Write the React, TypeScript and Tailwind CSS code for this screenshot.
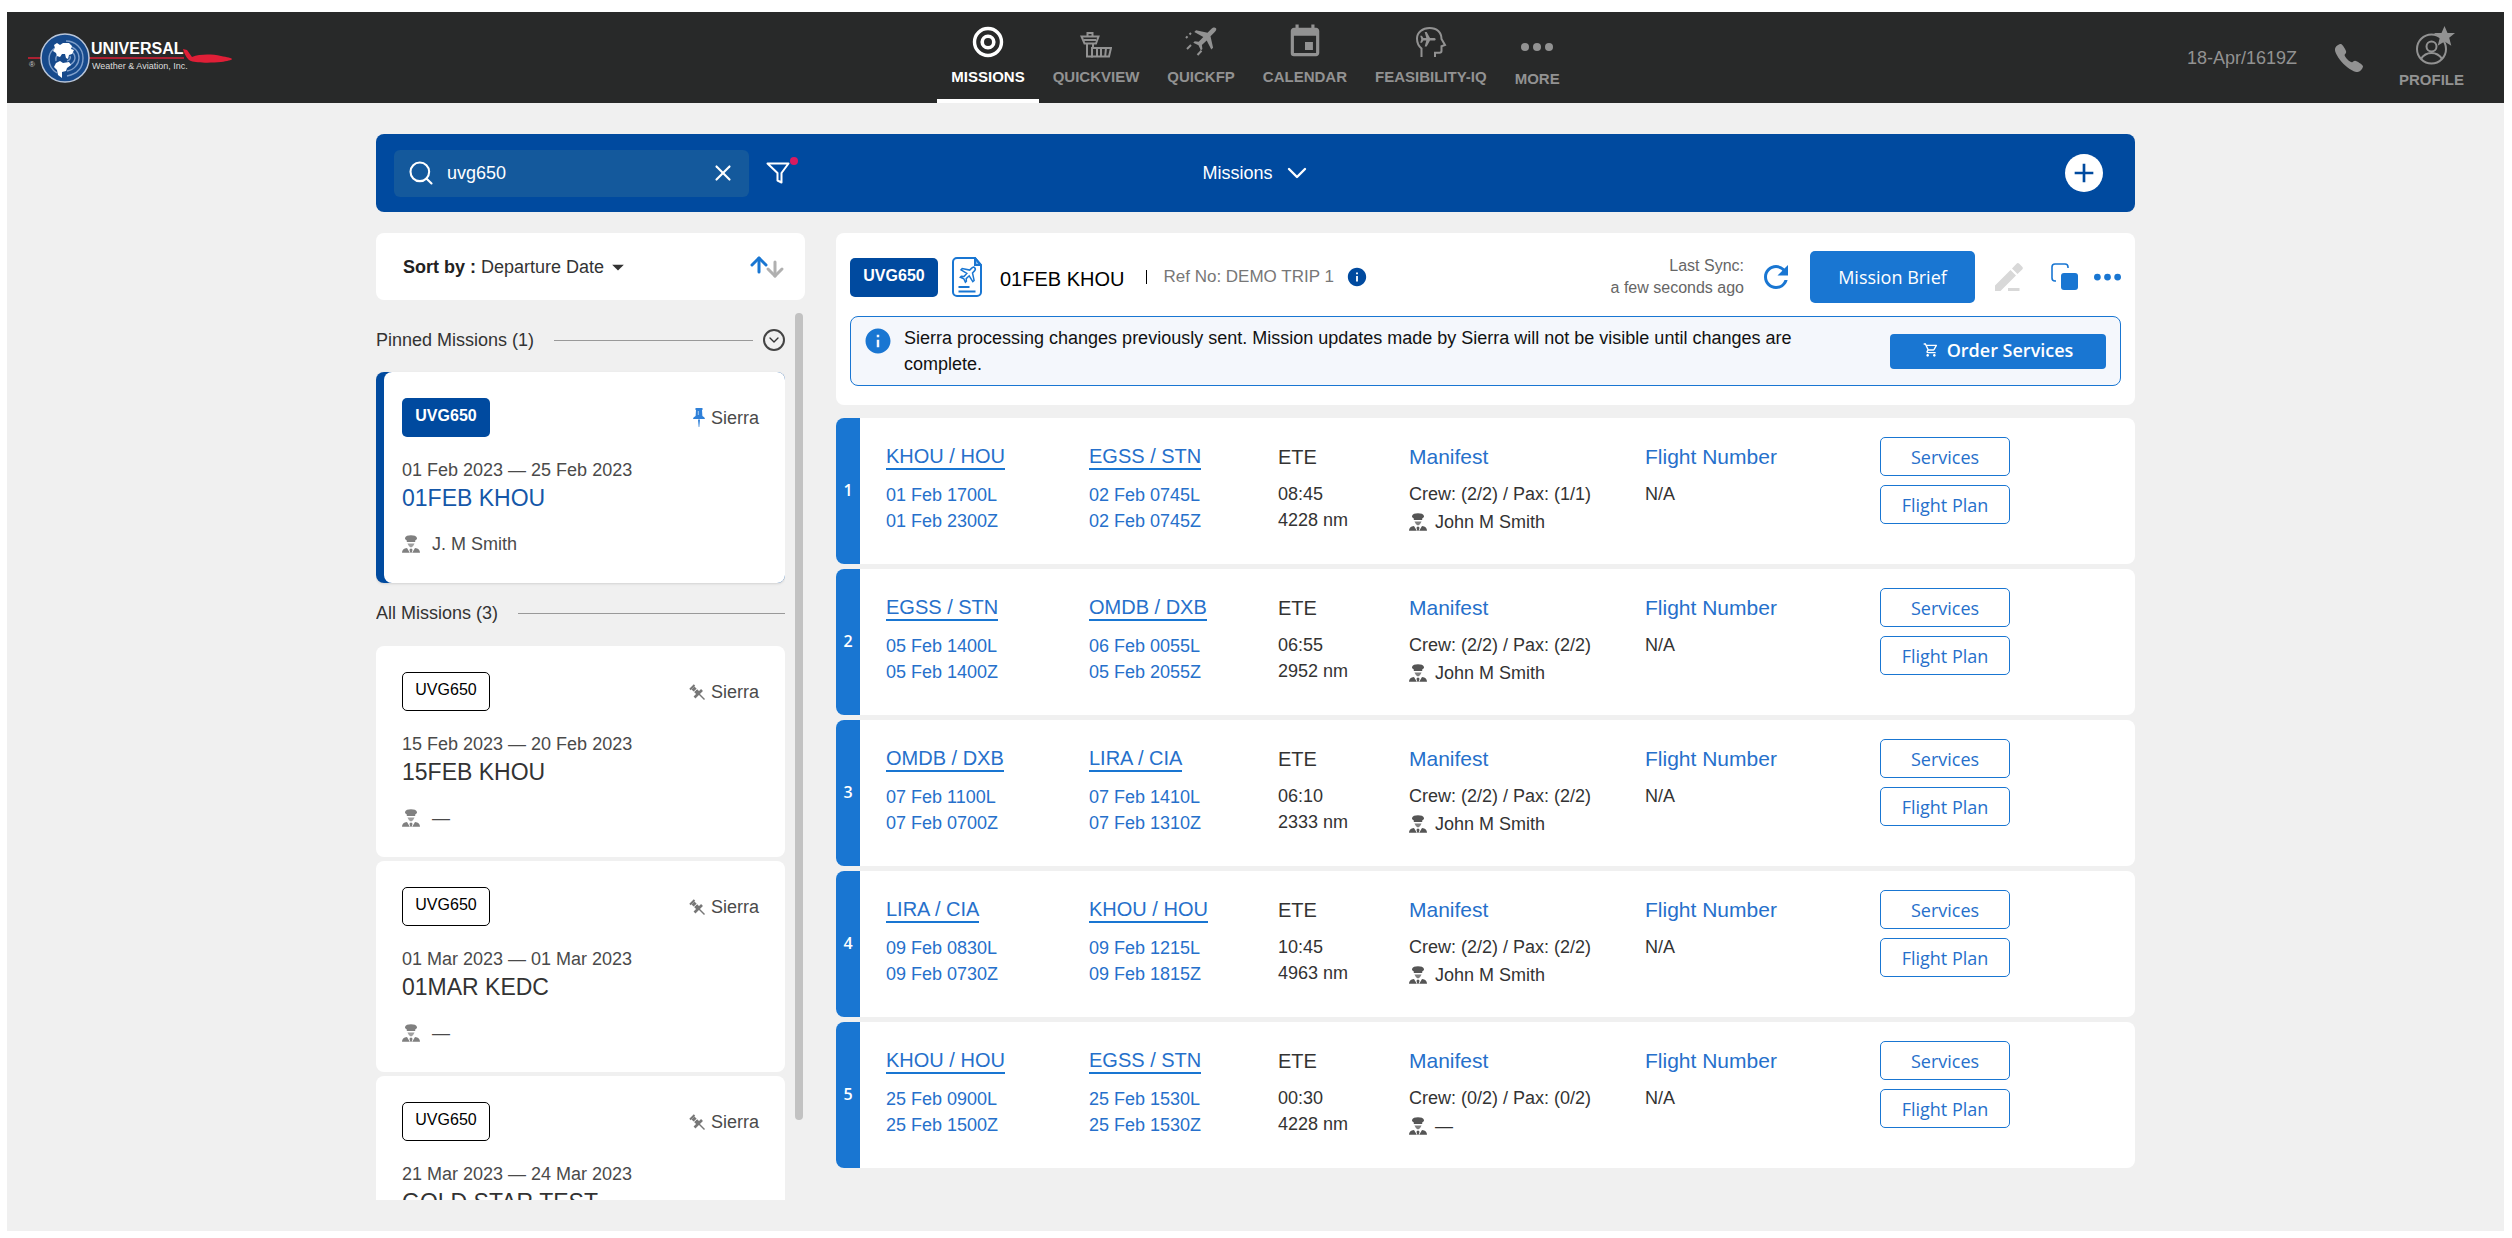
import { useState } from "react";
import clsx from "clsx";
import { IoCall } from "react-icons/io5";
import {
  MdAdd,
  MdArrowDropDown,
  MdEvent,
  MdInfo,
  MdOutlineShoppingCart,
  MdRefresh,
} from "react-icons/md";
import { ArrowDown, ArrowUp, ChevronDown, Search, X } from "lucide-react";

const missions = [
  { dates: "15 Feb 2023 — 20 Feb 2023", name: "15FEB KHOU", crew: "—" },
  { dates: "01 Mar 2023 — 01 Mar 2023", name: "01MAR KEDC", crew: "—" },
  { dates: "21 Mar 2023 — 24 Mar 2023", name: "GOLD STAR TEST", crew: "—" },
];

const legs = [
  {
    from: "KHOU / HOU",
    dep: ["01 Feb 1700L", "01 Feb 2300Z"],
    to: "EGSS / STN",
    arr: ["02 Feb 0745L", "02 Feb 0745Z"],
    ete: "08:45",
    dist: "4228 nm",
    manifest: "Crew: (2/2) / Pax: (1/1)",
    captain: "John M Smith",
  },
  {
    from: "EGSS / STN",
    dep: ["05 Feb 1400L", "05 Feb 1400Z"],
    to: "OMDB / DXB",
    arr: ["06 Feb 0055L", "05 Feb 2055Z"],
    ete: "06:55",
    dist: "2952 nm",
    manifest: "Crew: (2/2) / Pax: (2/2)",
    captain: "John M Smith",
  },
  {
    from: "OMDB / DXB",
    dep: ["07 Feb 1100L", "07 Feb 0700Z"],
    to: "LIRA / CIA",
    arr: ["07 Feb 1410L", "07 Feb 1310Z"],
    ete: "06:10",
    dist: "2333 nm",
    manifest: "Crew: (2/2) / Pax: (2/2)",
    captain: "John M Smith",
  },
  {
    from: "LIRA / CIA",
    dep: ["09 Feb 0830L", "09 Feb 0730Z"],
    to: "KHOU / HOU",
    arr: ["09 Feb 1215L", "09 Feb 1815Z"],
    ete: "10:45",
    dist: "4963 nm",
    manifest: "Crew: (2/2) / Pax: (2/2)",
    captain: "John M Smith",
  },
  {
    from: "KHOU / HOU",
    dep: ["25 Feb 0900L", "25 Feb 1500Z"],
    to: "EGSS / STN",
    arr: ["25 Feb 1530L", "25 Feb 1530Z"],
    ete: "00:30",
    dist: "4228 nm",
    manifest: "Crew: (0/2) / Pax: (0/2)",
    captain: "—",
  },
];

/* ICONS */

const TargetIcon = () => (
  <svg viewBox="0 0 32 32" className="size-8" fill="none" stroke="currentColor">
    <circle cx="16" cy="16" r="13.5" strokeWidth="3.4" />
    <circle cx="16" cy="16" r="5.8" strokeWidth="3.6" />
  </svg>
);

const TowerIcon = () => (
  <svg viewBox="0 0 32 32" className="size-8" fill="none" stroke="currentColor" strokeWidth="2">
    <path d="M1.5 10.5h17l-2.5 7H4.5zM4 14h12M7.5 10V7h5v3" />
    <path d="M7 17.5V30.500h5V23M13 17.500V22" />
    <path d="M12 22h19l-2 8.500H12zM17 22v8M21 22v8M26 22l-.8 8" />
  </svg>
);

const PlaneTrailIcon = () => (
  <svg viewBox="0 0 32 32" className="size-8" fill="none" stroke="currentColor" strokeWidth="2">
    <path
      d="M31 2.200c-1.200-1.200-3.200-.7-4.500.6l-4 4-11.500-2.600-1.700 1.800 9 5-4.600 4.800-4-.5-1.400 1.500 5.200 2.400 2.400 5.200 1.500-1.400-.5-4 4.800-4.600 4.600 9 1.800-1.700-2.600-11.500 4-4c1.300-1.300 2.400-3 1.500-4z"
      fill="currentColor"
      stroke="none"
    />
    <path d="M1 12l1.500-1.700M4.500 8.500L6 7M2 23l4-4M12.500 29l4-4.200" />
  </svg>
);

const HeadIcon = () => (
  <svg viewBox="0 0 32 32" className="size-8" fill="none" stroke="currentColor" strokeWidth="2">
    <path d="M6.500 31v-8.500C3.500 20 2 16.500 2 12.500 2 6.500 7.500 2 14.500 2c7.500 0 12 4.500 12 11l3.500 6-3.500 1.200V25c0 1-1 1.700-2 1.700h-4.500V31" />
    <path
      d="M18.800 12h-3.800l-3.300-6h-2l1.600 6H8.400L6.900 9.800H5.200l1.100 3.500-1.100 3.500h1.700l1.500-2.200h2.900l-1.600 6h2l3.300-6h3.800c1.300 0 1.900-.7 1.900-1.300s-.6-1.300-1.900-1.300z"
      fill="currentColor"
      stroke="none"
    />
  </svg>
);

const DotsIcon = ({ className }: { className: string }) => (
  <svg viewBox="0 0 32 10" className={className} fill="currentColor">
    <circle cx="4" cy="5" r="4" />
    <circle cx="16" cy="5" r="4" />
    <circle cx="28" cy="5" r="4" />
  </svg>
);

const ProfileIcon = () => (
  <svg viewBox="0 0 40 40" className="size-10" fill="none" stroke="currentColor" strokeWidth="2">
    <circle cx="16.500" cy="23" r="14.500" />
    <circle cx="16.500" cy="20.500" r="5" />
    <path d="M6 33c2.500-4 6-6 10.500-6S24.500 29 27 33" />
    <path
      d="M29.500 0l3 7h7.500l-5.800 4.700 2.100 8-6.800-4.300-6.800 4.300 2.100-8L19 7h7.500z"
      fill="currentColor"
      stroke="none"
    />
  </svg>
);

const FilterIcon = () => (
  <svg viewBox="0 0 24 24" className="size-6" fill="none" stroke="currentColor" strokeWidth="2">
    <path d="M1.500 2.500h21l-7 9.500v9.500l-4-2V12z" strokeLinejoin="round" />
  </svg>
);

const PinIcon = () => (
  <svg viewBox="0 0 12 20" className="h-5 w-3" fill="currentColor">
    <path d="M2.500 0h7v2H9l.4 6c1.600.8 2.400 1.800 2.600 3H0c.2-1.200 1-2.200 2.600-3L3 2h-.5zM5 11.500h2L6.300 19h-.6z" />
    <path d="M4.800 3h1v4h-1z" fill="#fff" opacity=".6" />
  </svg>
);

const UnpinIcon = () => (
  <svg viewBox="0 0 16 16" className="size-4" fill="none" stroke="currentColor">
    <path d="M1 5.500L5.500 1" strokeWidth="2" />
    <path d="M4 4l5.500 5.500" strokeWidth="4" />
    <path d="M5.500 13.500l7.500-7.500" strokeWidth="2.600" />
    <path d="M10 10l5.500 5.500" strokeWidth="1.400" />
    <path d="M2 10.500L10.500 2.500" stroke="#fff" strokeWidth="1" />
  </svg>
);

const PilotIcon = ({ className }: { className?: string }) => (
  <svg viewBox="0 0 18 18" className={clsx("size-[18px] shrink-0", className)} fill="currentColor">
    <path d="M3 3C3.500 1 6 .3 9 .3s5.500.7 6 2.700c.3 1.200-1 2-1.800 2.500V7H4.800V5.500C4 5 2.700 4.200 3 3z" />
    <path d="M5.500 8.500h7L11 11.200l-2 1.300-2-1.300z" opacity=".75" />
    <path d="M0 17.800c0-2.700 1.500-4.200 5-4.800l2.800 4.800zM18 17.800c0-2.700-1.500-4.200-5-4.800l-2.800 4.800zM8 13.800h2l.5 1.200-.8 2.800H8.300L7.500 15z" />
  </svg>
);

const FlightDocIcon = () => (
  <svg viewBox="0 0 30 40" className="h-10 w-[30px]" fill="none" stroke="#1976d2" strokeWidth="2">
    <path d="M5 1h18l6 7v27a4 4 0 0 1-4 4H5a4 4 0 0 1-4-4V5a4 4 0 0 1 4-4z" />
    <path d="M23 1v7h6z" fill="#1976d2" fillOpacity=".5" />
    <path d="M6.500 30h11M6.500 34.500h17" />
    <path
      d="M22.500 10.500c-.8-.8-2-.2-2.800.6l-2 2-7.500-1.600-1.200 1.300 5.800 3.600-2.800 3-2.700-.2-1 1 3.500 1.600 1.600 3.500 1-1-.2-2.700 3-2.800 3.600 5.800 1.300-1.200-1.600-7.500 2-2c.8-.8 1-2.400 0-3.400z"
      strokeWidth="1.500"
    />
  </svg>
);

const PencilIcon = () => (
  <svg viewBox="0 0 28 28" className="size-7" fill="currentColor">
    <path d="M0 22.500L15.500 7l5.500 5.500L5.500 28H0zM17 5.500l4.500-4.700a2 2 0 0 1 2.800 0l2.900 2.900a2 2 0 0 1 0 2.800L22.500 11zM13 25h11.500v3H13z" />
  </svg>
);

const CopyIcon = () => (
  <svg viewBox="0 0 28 28" className="size-7" fill="none" stroke="currentColor" strokeWidth="1.600">
    <path d="M5 18H4a3 3 0 0 1-3-3V4a3 3 0 0 1 3-3h10a3 3 0 0 1 3 3v1" />
    <rect x="10" y="10" width="17" height="17" rx="3" fill="currentColor" stroke="none" />
  </svg>
);

const Logo = () => (
  <svg viewBox="0 0 206 50" className="h-[50px] w-[206px]" role="img" aria-label="Universal Weather & Aviation, Inc.">
    <path d="M0 25h156" stroke="#d81f36" strokeWidth="1.500" />
    <circle cx="37" cy="25" r="24" fill="#174a8c" stroke="#b9c6da" strokeWidth="1.500" />
    <g fill="none" stroke="#7f9fcb" strokeWidth="1.400">
      <path d="M38 8c9 0 17 7 17 17s-6 16-16 18M36 13c-9 0-15 5-15 13 0 6 3 11 8 14" />
      <path d="M40 13c7 1 11 6 11 12s-5 12-12 13M41 18c4 1 6 4 6 7s-3 7-8 8" />
      <path d="M33 20c-4 1-6 4-5 8M42 23c1 2 0 4-3 5" />
    </g>
    <path
      d="M26 12l3-2 3 2 3-2h6l3 3-1 3 3 1-2 4-3 1-1 4-2-1-1-4h-3l-2 3-3-1-1-3-3-2 2-3zM28 30l4-2 3 2 6-1 2 3-4 3-1 3-4 1v6l-4-3-1-5-3-3z"
      fill="#fff"
    />
    <path d="M155 16l4 1 5 7c8-3 19-3 29-1 6 1 11 2 11 3s-5 2-11 3c-10 1-24 1-30-1-3-1-6-5-8-12z" fill="#e01f37" />
    <text x="1" y="34" fontSize="8" fill="#ccc" fontFamily="Liberation Sans">®</text>
    <text x="63" y="21" fontSize="16" fontWeight="700" fill="#fff" fontFamily="Liberation Sans">
      UNIVERSAL
    </text>
    <text x="64" y="36" fontSize="9" fill="#ddd" fontFamily="Liberation Sans">
      Weather &amp; Aviation, Inc.
    </text>
  </svg>
);

/* HEADER */

const navItems = [
  { label: "MISSIONS", icon: <TargetIcon />, active: true },
  { label: "QUICKVIEW", icon: <TowerIcon /> },
  { label: "QUICKFP", icon: <PlaneTrailIcon /> },
  { label: "CALENDAR", icon: <MdEvent className="size-[38px]" /> },
  { label: "FEASIBILITY-IQ", icon: <HeadIcon /> },
];

const Header = () => (
  <header className="grid h-[91px] shrink-0 grid-cols-[1fr_auto_1fr] bg-[#282929] text-[#929292]">
    <a href="#" className="ml-[21px] mt-[21px] justify-self-start">
      <Logo />
    </a>
    <nav className="flex text-[15px] leading-5 font-bold">
      {navItems.map((item) => (
        <a
          key={item.label}
          href="#"
          className={clsx(
            "flex flex-col items-center border-b-4 px-[14px] pt-[14px]",
            item.active ? "border-white text-white" : "border-transparent"
          )}
        >
          <span className="flex h-8 items-center">{item.icon}</span>
          <span className="mt-[9px]">{item.label}</span>
        </a>
      ))}
      <button className="flex flex-col items-center px-[14px] pt-[14px] font-bold">
        <span className="flex h-8 items-end pb-[6px]">
          <DotsIcon className="h-[10px] w-8" />
        </span>
        <span className="mt-[11px]">MORE</span>
      </button>
    </nav>
    <div className="flex items-center justify-self-end pr-10">
      <span className="text-lg">18-Apr/1619Z</span>
      <button aria-label="Call" className="ml-9">
        <IoCall className="size-8" />
      </button>
      <button className="ml-[34px] flex flex-col items-center text-[15px] leading-5 font-bold">
        <span className="pl-2">
          <ProfileIcon />
        </span>
        <span className="mt-1">PROFILE</span>
      </button>
    </div>
  </header>
);

const Toolbar = () => {
  const [query, setQuery] = useState("uvg650");

  return (
    <div className="grid h-[78px] shrink-0 grid-cols-[1fr_auto_1fr] items-center rounded-lg bg-[#004a9f] text-white">
      <div className="flex items-center gap-[17px] pl-[18px]">
        <label className="flex h-[47px] w-[355px] items-center rounded-md bg-[#14599c] px-[13px]">
          <Search className="size-7 shrink-0" strokeWidth={1.8} />
          <input
            aria-label="Search missions"
            value={query}
            onChange={(e) => setQuery(e.target.value)}
            className="ml-3 w-full min-w-0 text-lg outline-none"
          />
          <button aria-label="Clear search" onClick={() => setQuery("")}>
            <X className="size-[26px]" strokeWidth={2} />
          </button>
        </label>
        <button aria-label="Filter" className="relative">
          <FilterIcon />
          <span className="absolute -top-1 -right-2 size-2 rounded-full bg-[#d81b60]" />
        </button>
      </div>
      <button className="flex items-center gap-2 pl-1 text-lg">
        Missions
        <ChevronDown className="size-8" strokeWidth={1.8} />
      </button>
      <button
        aria-label="Add mission"
        className="mr-8 flex size-[38px] items-center justify-center justify-self-end rounded-full bg-white text-[#004a9f]"
      >
        <MdAdd className="size-8" />
      </button>
    </div>
  );
};

/* MISSION LIST */

const MissionCard = ({ mission, pinned }: { mission: (typeof missions)[0]; pinned?: boolean }) => (
  <article
    className={clsx(
      "h-[211px] shrink-0 rounded-lg bg-white pt-[26px] pr-[26px] text-lg leading-6 text-[#4a4a4a]",
      pinned ? "pl-[18px]" : "pl-[26px]"
    )}
  >
    <div className="flex items-center justify-between">
      <span
        className={clsx(
          "flex h-[39px] w-[88px] items-center justify-center rounded-[5px] pb-[3px] text-base",
          pinned ? "bg-[#004a9f] font-bold text-white" : "border border-black text-black"
        )}
      >
        UVG650
      </span>
      <span className="flex items-center gap-[6px]">
        {pinned ? (
          <span className="text-[#2f80d8]">
            <PinIcon />
          </span>
        ) : (
          <span className="text-[#777]">
            <UnpinIcon />
          </span>
        )}
        Sierra
      </span>
    </div>
    <p className="mt-[21px]">{mission.dates}</p>
    <h3 className={clsx("text-[23px] leading-8", pinned ? "text-[#1557a8]" : "text-[#333]")}>{mission.name}</h3>
    <p className="mt-[18px] flex items-center gap-3">
      <PilotIcon className="text-[#808080]" />
      {mission.crew}
    </p>
  </article>
);

const MissionList = () => (
  <aside className="flex min-h-0 w-[429px] shrink-0 flex-col">
    <div className="flex h-[67px] shrink-0 items-center justify-between rounded-lg bg-white pr-[18px] pl-[27px] text-lg text-[#333]">
      <button className="flex items-center">
        <b className="mr-[5px] text-[#222]">Sort by :</b> Departure Date
        <MdArrowDropDown className="size-7" />
      </button>
      <button aria-label="Sort direction" className="flex">
        <ArrowUp className="-mr-2 size-6 text-[#1976d2]" strokeWidth={3} />
        <ArrowDown className="mt-1 size-6 text-[#b0b0b0]" strokeWidth={3} />
      </button>
    </div>

    <div className="mt-[13px] flex min-h-0 flex-1 gap-[10px] pr-[2px]">
      <div className="flex min-w-0 flex-1 flex-col overflow-y-auto text-lg leading-6 [scrollbar-width:none]">
        <div className="mt-[15px] flex items-center text-[#333]">
          Pinned Missions (1)
          <span className="mr-[10px] ml-5 h-px flex-1 bg-[#999]" />
          <button aria-label="Collapse" className="flex size-[22px] items-center justify-center rounded-full border-2 border-[#444]">
            <ChevronDown className="size-4" strokeWidth={2} />
          </button>
        </div>
        <div className="mt-5 rounded-lg bg-[#004a9f] pl-2 shadow-sm">
          <MissionCard pinned mission={{ dates: "01 Feb 2023 — 25 Feb 2023", name: "01FEB KHOU", crew: "J. M Smith" }} />
        </div>
        <div className="mt-[18px] flex items-center text-[#333]">
          All Missions (3)
          <span className="ml-5 h-px flex-1 bg-[#999]" />
        </div>
        <div className="mt-[21px] flex flex-col gap-1">
          {missions.map((mission) => (
            <MissionCard key={mission.name} mission={mission} />
          ))}
        </div>
      </div>
      {/* scroll thumb */}
      <div className="h-[91%] w-2 shrink-0 rounded-full bg-[#c2c2c2]" />
    </div>
  </aside>
);

/* MISSION DETAIL */

const MissionHeader = () => (
  <section className="rounded-lg bg-white px-[14px] pt-[18px] pb-[19px]">
    <div className="flex h-[52px] items-center">
      <span className="flex h-[39px] w-[88px] items-center justify-center rounded-[5px] bg-[#004a9f] pb-[3px] text-base font-bold text-white">
        UVG650
      </span>
      <span className="ml-[14px]">
        <FlightDocIcon />
      </span>
      <h2 className="ml-[18px] pt-1 text-[20px] leading-6 text-black">01FEB KHOU</h2>
      <span className="ml-[22px] h-[14px] w-px bg-black" />
      <span className="ml-4 text-[17px] text-[#777]">Ref No: DEMO TRIP 1</span>
      <MdInfo className="ml-3 size-[22px] text-[#004a9f]" />

      <p className="ml-auto text-right text-base leading-[22px] text-[#666]">
        Last Sync:
        <br />a few seconds ago
      </p>
      <div className="flex items-center text-[#1976d2]">
        <button aria-label="Refresh" className="ml-[14px]">
          <MdRefresh className="size-9" />
        </button>
        <button className="ml-4 h-[52px] w-[165px] rounded-[5px] bg-[#1976d2] font-['Open_Sans'] text-lg font-medium text-white">
          Mission Brief
        </button>
        <button aria-label="Edit" className="ml-5 text-[#d8d8d8]">
          <PencilIcon />
        </button>
        <button aria-label="Copy" className="ml-7">
          <CopyIcon />
        </button>
        <button aria-label="More actions" className="ml-[15px]">
          <DotsIcon className="h-[10px] w-[27px]" />
        </button>
      </div>
    </div>

    <div className="mt-[13px] flex items-center justify-between rounded-lg border border-[#1976d2] bg-[#f4f7fc] py-2 pr-[14px] pl-3 text-lg leading-[26px] text-[#111]">
      <div className="flex gap-[11px]">
        <MdInfo className="mt-px size-[30px] shrink-0 text-[#1976d2]" />
        <p className="max-w-[920px]">
          Sierra processing changes previously sent. Mission updates made by Sierra will not be visible until changes are
          complete.
        </p>
      </div>
      <button className="flex h-[35px] w-[216px] items-center justify-center gap-2 rounded bg-[#1976d2] pb-0.5 font-['Open_Sans'] text-lg font-semibold text-white">
        <MdOutlineShoppingCart className="size-4" />
        Order Services
      </button>
    </div>
  </section>
);

const AirportCell = ({ airport, times }: { airport: string; times: string[] }) => (
  <div>
    <a href="#" className="inline-block border-b-2 border-[#1976d2] text-[20px] leading-6">
      {airport}
    </a>
    <p className="mt-3">{times[0]}</p>
    <p>{times[1]}</p>
  </div>
);

const LegRow = ({ leg, index }: { leg: (typeof legs)[0]; index: number }) => (
  <section className="flex min-h-[146px] overflow-hidden rounded-lg bg-white">
    <span className="flex w-6 shrink-0 items-center justify-center bg-[#1976d2] pb-0.5 font-['Open_Sans'] text-base font-semibold text-white">
      {index}
    </span>
    <div className="grid flex-1 grid-cols-[203fr_189fr_131fr_236fr_235fr_255fr] pl-[26px] text-lg leading-[26px] text-[#2670cb]">
      <div className="pt-[26px]">
        <AirportCell airport={leg.from} times={leg.dep} />
      </div>
      <div className="pt-[26px]">
        <AirportCell airport={leg.to} times={leg.arr} />
      </div>
      <div className="pt-[26px] text-[#333]">
        <p className="text-[20px]">ETE</p>
        <p className="mt-[11px]">{leg.ete}</p>
        <p>{leg.dist}</p>
      </div>
      <div className="pt-[26px] text-[#333]">
        <a href="#" className="block text-[21px] text-[#2670cb]">
          Manifest
        </a>
        <p className="mt-[11px]">{leg.manifest}</p>
        <p className="mt-0.5 flex items-center gap-2">
          <PilotIcon className="text-[#555]" />
          {leg.captain}
        </p>
      </div>
      <div className="pt-[26px] text-[#333]">
        <a href="#" className="block text-[21px] text-[#2670cb]">
          Flight Number
        </a>
        <p className="mt-[11px]">N/A</p>
      </div>
      <div className="flex flex-col gap-[9px] pt-[19px] font-['Open_Sans']">
        <button className="h-[39px] w-[130px] rounded-[5px] border border-[#1976d2]">Services</button>
        <button className="h-[39px] w-[130px] rounded-[5px] border border-[#1976d2]">Flight Plan</button>
      </div>
    </div>
  </section>
);

const App = () => {
  return (
    <div className="flex h-screen flex-col bg-white pt-3 pr-2 pb-[7px] pl-[7px] font-['Liberation_Sans',Arial,sans-serif]">
      <Header />
      <div className="flex min-h-0 flex-1 flex-col bg-[#f0f0f0] pt-[31px] pb-[31px]">
        <div className="mx-auto flex min-h-0 w-full max-w-[1759px] flex-1 flex-col">
          <Toolbar />
          <main className="mt-[21px] flex min-h-0 flex-1 gap-[31px]">
            <MissionList />
            <div className="min-w-0 flex-1">
              <MissionHeader />
              <div className="mt-[13px] flex flex-col gap-[5px]">
                {legs.map((leg, i) => (
                  <LegRow key={i} leg={leg} index={i + 1} />
                ))}
              </div>
            </div>
          </main>
        </div>
      </div>
    </div>
  );
};

export default App;
